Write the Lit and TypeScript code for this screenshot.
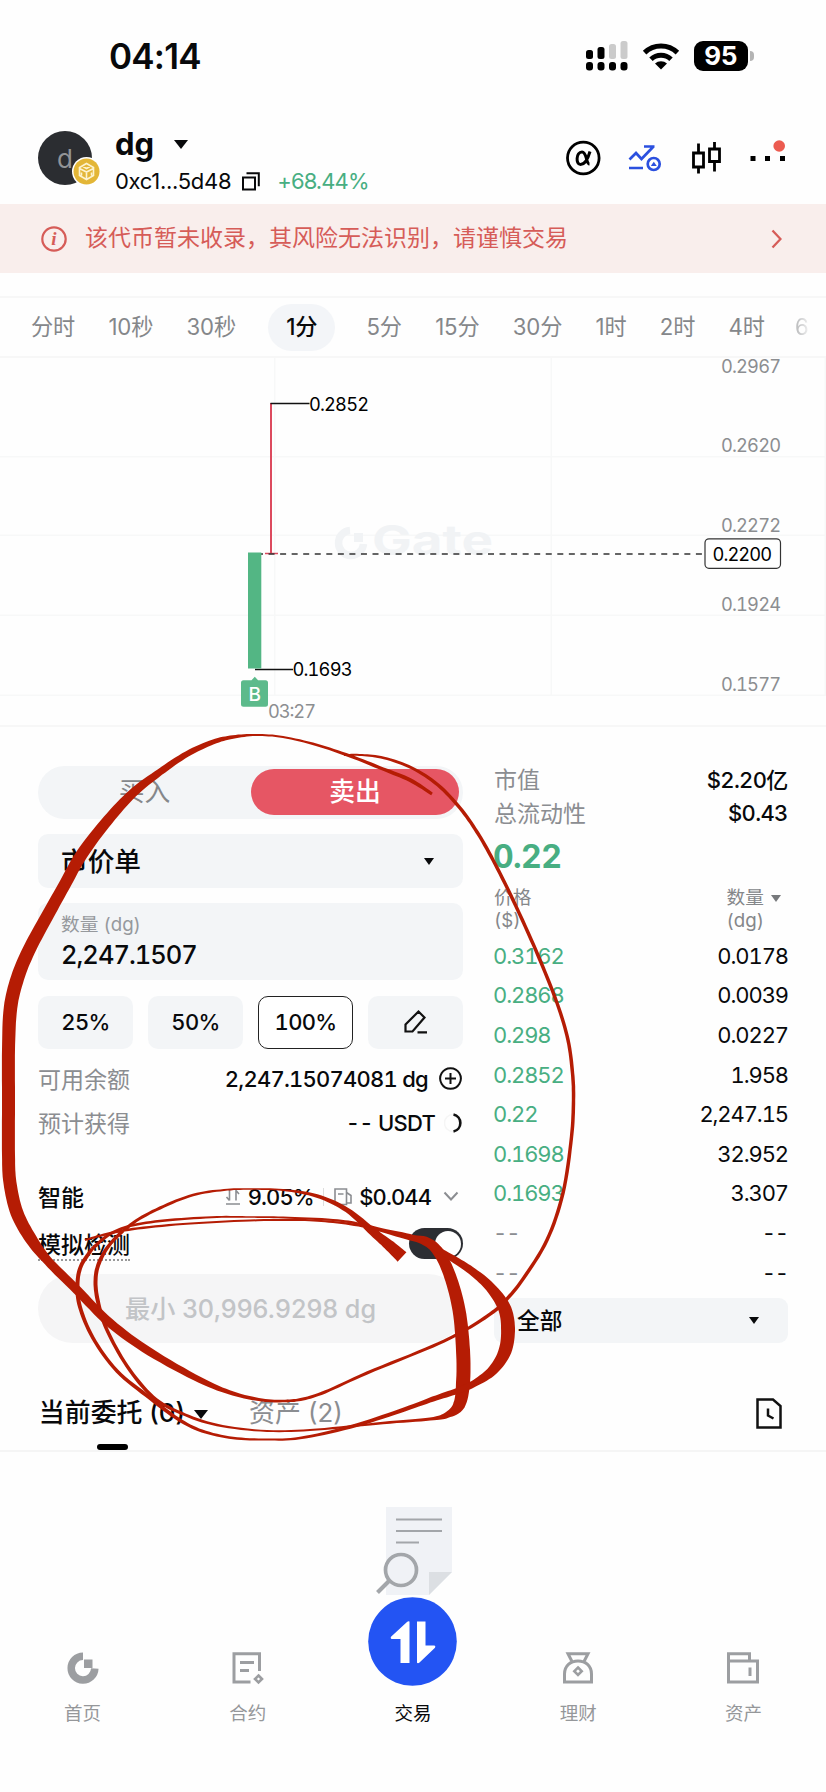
import { LitElement, html, svg, css } from "lit";
import { customElement } from "lit/decorators.js";
import { classMap } from "lit/directives/class-map.js";

const base = css`
  :host {
    display: block;
    font-family: Inter, "Noto Sans CJK SC", sans-serif;
    font-variant-numeric: tabular-nums;
    color: #08090b;
  }
  * {
    box-sizing: border-box;
  }
  svg {
    display: block;
    flex: none;
  }
  .caret {
    flex: none;
    width: 0;
    height: 0;
    border-left: 5.5px solid transparent;
    border-right: 5.5px solid transparent;
    border-top: 7px solid #08090b;
  }
`;

type Pt = [number, number, number];

/* Builds the outline of a brush stroke: each point is x, y and width. */
function brush(pts: Pt[]): string {
  const s: Pt[] = [];
  const n = pts.length;
  for (let i = 0; i < n - 1; i++) {
    const p0 = pts[Math.max(0, i - 1)];
    const p1 = pts[i];
    const p2 = pts[i + 1];
    const p3 = pts[Math.min(n - 1, i + 2)];
    for (let k = 0; k < 8; k++) {
      const t = k / 8;
      const f = (j: number) =>
        0.5 *
        (2 * p1[j] +
          (p2[j] - p0[j]) * t +
          (2 * p0[j] - 5 * p1[j] + 4 * p2[j] - p3[j]) * t * t +
          (3 * p1[j] - p0[j] - 3 * p2[j] + p3[j]) * t * t * t);
      s.push([f(0), f(1), p1[2] + (p2[2] - p1[2]) * t]);
    }
  }
  s.push(pts[n - 1]);
  const a: string[] = [];
  const b: string[] = [];
  s.forEach((p, i) => {
    const q = s[Math.max(0, i - 1)];
    const r = s[Math.min(s.length - 1, i + 1)];
    const dx = r[0] - q[0];
    const dy = r[1] - q[1];
    const l = Math.hypot(dx, dy) || 1;
    const ox = ((-dy / l) * p[2]) / 2;
    const oy = ((dx / l) * p[2]) / 2;
    a.push(`${(p[0] + ox).toFixed(1)} ${(p[1] + oy).toFixed(1)}`);
    b.unshift(`${(p[0] - ox).toFixed(1)} ${(p[1] - oy).toFixed(1)}`);
  });
  return `M${a.join("L")}L${b.join("L")}Z`;
}

const STROKES: Pt[][] = [
  [
    [344, 755, 2], [362, 755, 2], [384, 758, 2.5], [412, 768, 3], [438, 785, 3.5], [460, 808, 3.5], [477, 832, 3.5],
    [493, 860, 3.5], [513, 900, 3.5], [537, 953, 3.5], [557, 1003, 3.5], [568, 1040, 3.5], [572.5, 1073, 3.5],
    [573.5, 1100, 3.5], [571.5, 1137, 3.5], [563, 1193, 3.5], [547, 1240, 3.5], [523, 1279, 3.5], [506, 1300, 3.5],
    [493, 1312, 3.5], [467, 1329, 3], [433, 1346, 3], [367, 1373, 3], [325, 1392, 3], [303, 1399, 3], [285, 1401, 2.5],
    [262, 1400, 3], [233, 1393.5, 4], [200, 1380, 6], [150, 1352, 8], [110, 1323, 9], [77, 1290, 9], [48, 1261, 9],
    [31, 1239, 12], [17, 1213, 13], [10, 1183, 13], [8.5, 1155, 13], [8.5, 1100, 13], [8.5, 1050, 13], [10.5, 1008, 13.5],
    [17.5, 978, 13.5], [28.5, 951, 13], [45, 920, 12.5], [64, 886, 12], [82, 854, 12], [108, 820, 10.5],
    [133, 793, 9], [160, 772, 7], [187, 754, 6], [213, 742, 5], [233, 737, 3.5], [256, 735, 2], [283, 737, 2],
    [317, 745, 2.5], [350, 756, 3], [383, 769, 3.5], [410, 780, 4], [432, 794, 3],
  ],
  [
    [402, 1257, 13], [390, 1246, 11], [373, 1232, 8], [347, 1210, 5], [317, 1196, 3.5], [283, 1190, 2], [250, 1189, 1.5],
    [224, 1190, 2], [193, 1195, 2.5], [160, 1208, 3], [133, 1223, 3], [111, 1243, 3.5], [99, 1263, 4], [95.5, 1282, 4],
    [98.5, 1304, 4], [107, 1330, 3.5], [127, 1366, 3.5], [153, 1397, 3.5], [181, 1413, 3], [217, 1425, 2.5],
    [267, 1431, 1.8], [317, 1429.5, 2], [383, 1423, 2.5], [430, 1419, 3], [447, 1415, 6], [459, 1405, 12],
    [463, 1383, 14], [463, 1350, 14], [459, 1310, 13], [450, 1276, 12], [439, 1253, 11], [425, 1241, 9], [400, 1236, 3],
    [367, 1227, 2.5], [333, 1222, 2.2], [300, 1220, 2], [250, 1220.5, 2], [183, 1224, 2], [133, 1229, 2.5],
    [107, 1234, 2.5], [85, 1240, 2],
  ],
  [
    [92, 1249, 3.5], [81, 1266, 4], [77.5, 1284, 4], [80, 1307, 4], [93, 1338, 3.5], [117, 1371, 3.5], [150, 1398, 4],
    [178, 1419, 3.5], [202, 1431, 3], [233, 1438, 2.5], [267, 1439.5, 2], [300, 1438, 2.5], [350, 1427, 3.5],
    [400, 1411, 4], [433, 1399, 5], [457, 1391, 6], [475, 1383, 7], [493, 1370, 10], [505, 1351, 13], [508, 1328, 14],
    [504, 1307, 13], [490, 1287, 10], [473, 1272, 8], [455, 1260, 7], [433, 1247, 5], [413, 1237, 4], [383, 1230, 3],
    [360, 1224, 2.5], [333, 1220, 2.2], [283, 1217.5, 2], [250, 1217, 1.5], [217, 1217, 2], [170, 1220, 2.5],
    [134, 1225, 2.5], [110, 1234, 3], [92, 1249, 3.5],
  ],
];

@customElement("status-bar")
class StatusBar extends LitElement {
  static styles = [
    base,
    css`
      .bar {
        height: 112px;
        display: flex;
        align-items: center;
        justify-content: space-between;
        padding: 0 72px 0 109px;
      }
      .time {
        font-size: 35px;
        font-weight: 600;
        letter-spacing: -0.8px;
        font-variant-numeric: normal;
      }
      .right {
        display: flex;
        align-items: center;
      }
      .wifi {
        margin: 0 14px 0 13px;
      }
      .battery {
        display: flex;
        align-items: center;
      }
      .cell {
        width: 54px;
        height: 30px;
        border-radius: 9px;
        background: #000;
        color: #fff;
        font-size: 26px;
        font-weight: 700;
        line-height: 30px;
        text-align: center;
      }
      .nub {
        margin-left: 2px;
        width: 4px;
        height: 10px;
        border-radius: 0 5px 5px 0;
        background: #b4b4b4;
      }
    `,
  ];
  render() {
    return html`<div class="bar">
      <div class="time">04:14</div>
      <div class="right">
        <svg width="43" height="30" viewBox="0 0 43 30">
          <g fill="#000">
            <rect x="0" y="9" width="7" height="9" rx="2.5" />
            <rect x="11.5" y="6" width="7" height="12" rx="2.5" />
            ${[0, 11.5, 23, 34.5].map((x) => svg`<rect x=${x} y="21" width="7" height="8.5" rx="3" />`)}
          </g>
          <g fill="#cbcbcb">
            <rect x="23" y="3" width="7" height="15" rx="2.5" />
            <rect x="34.5" y="0" width="7" height="18" rx="2.5" />
          </g>
        </svg>
        <svg class="wifi" width="38" height="28" viewBox="0 0 38 28">
          <g fill="none" stroke="#000" stroke-width="5">
            <path d="M2.6 10.6a23.5 23.5 0 0 1 32.8 0" />
            <path d="M9 17.2a14.5 14.5 0 0 1 20 0" />
          </g>
          <path d="M19 27.5l-6-6a9 9 0 0 1 12 0z" />
        </svg>
        <div class="battery"><div class="cell">95</div><div class="nub"></div></div>
      </div>
    </div>`;
  }
}

@customElement("token-header")
class TokenHeader extends LitElement {
  static styles = [
    base,
    css`
      .head {
        height: 92px;
        display: flex;
        padding: 0 38px;
      }
      .avatar {
        position: relative;
        margin-top: 19px;
        width: 54px;
        height: 54px;
        border-radius: 50%;
        background: #2b2d31;
        color: #929497;
        font-size: 26px;
        line-height: 55px;
        text-align: center;
      }
      .chain {
        position: absolute;
        left: 33.5px;
        top: 25.5px;
      }
      .info {
        margin-left: 23px;
      }
      .name {
        margin-top: 10px;
        height: 42px;
        display: flex;
        align-items: center;
        font-size: 31px;
        font-weight: 700;
      }
      .name .caret {
        margin: 2px 0 0 20px;
        border-left-width: 7px;
        border-right-width: 7px;
        border-top-width: 9px;
      }
      .addr {
        padding-top: 2px;
        height: 32px;
        display: flex;
        align-items: center;
        font-size: 22px;
        letter-spacing: -0.3px;
        font-variant-numeric: normal;
      }
      .copy {
        margin: 0 17px 0 11px;
      }
      .up {
        color: #48ae82;
        letter-spacing: -0.9px;
      }
      .tools {
        margin: 24px 3px 0 auto;
        display: flex;
        height: 44px;
        align-items: center;
      }
      .banner {
        height: 69px;
        display: flex;
        align-items: center;
        background: #f9eeec;
        color: #d65c58;
        padding: 0 44px 0 41px;
        font-size: 23px;
      }
      .banner span {
        flex: 1;
        margin: -6px 0 0 18px;
      }
      .i {
        font: italic 700 19px "Liberation Serif", serif;
      }
    `,
  ];
  render() {
    return html`<div class="head">
        <div class="avatar">
          d
          <svg class="chain" width="29" height="29" viewBox="0 0 29 29">
            <circle cx="14.5" cy="14.5" r="14.5" fill="#fff" />
            <circle cx="14.5" cy="14.5" r="13" fill="#e3b637" />
            <path
              d="M14.5 6.5l7 4v8l-7 4-7-4v-8zM7.5 11.5l7 3.5 7-3.5M14.5 15v7M11 9.5l3.5 2 3.5-2M9.5 15.5v3M19.5 15.5v3"
              fill="none"
              stroke="#fdf3cf"
              stroke-width="1.6"
            />
          </svg>
        </div>
        <div class="info">
          <div class="name">dg<i class="caret"></i></div>
          <div class="addr">
            0xc1...5d48
            <svg class="copy" width="18" height="19" viewBox="0 0 18 19">
              <path d="M1 5.5h12v12H1zM4.5 1.2h12.3v13" fill="none" stroke="#08090b" stroke-width="2" />
            </svg>
            <span class="up">+68.44%</span>
          </div>
        </div>
        <div class="tools">
          <svg width="220" height="44" viewBox="566 136 220 44">
            <g fill="none" stroke="#000" stroke-width="2.8">
              <circle cx="584.3" cy="158" r="15.8" />
              <path d="M591 151.5c-2 7-5 13-9.5 13-5 0-4.5-12.5 1.5-12.5 5 0 4 12 7.5 12" stroke-width="3" />
              <path
                d="M694.5 153h10v14h-10zM699.5 143.5v9M699.5 167v6.5M710.5 149h10v12.5h-10zM715.5 142v7M715.5 161.5v10"
              />
            </g>
            <g fill="none" stroke="#2b50df" stroke-width="2.7">
              <path d="M630.5 159.5l6.5-6.5 5.5 6 12-12.5M645 146.5h10.5M630 168h14" />
              <circle cx="654.7" cy="164" r="6" />
            </g>
            <path d="M651.8 166l3-4.2 3 4.2z" fill="#2b50df" />
            <path d="M751.5 156h5v5h-5zM766 156h5v5h-5zM781 156h5v5h-5z" />
            <circle cx="780.2" cy="146" r="5.8" fill="#ec5b50" />
          </svg>
        </div>
      </div>
      <div class="banner">
        <svg width="26" height="26" viewBox="0 0 26 26">
          <circle cx="13" cy="13" r="11.7" fill="none" stroke="#d65c58" stroke-width="2.2" />
          <text class="i" x="13" y="19" text-anchor="middle" fill="#d65c58">i</text>
        </svg>
        <span>该代币暂未收录，其风险无法识别，请谨慎交易</span>
        <svg width="11" height="20" viewBox="0 0 11 20">
          <path d="M1.5 1.5l8 8.5-8 8.5" fill="none" stroke="#d65c58" stroke-width="2.3" />
        </svg>
      </div>`;
  }
}

@customElement("time-tabs")
class TimeTabs extends LitElement {
  static styles = [
    base,
    css`
      .tabs {
        margin-top: 23px;
        height: 62px;
        border-top: 2px solid #f7f7f7;
        border-bottom: 2px solid #f7f7f7;
        display: flex;
        align-items: center;
        padding: 0 0 0 31px;
        gap: 33.2px;
        white-space: nowrap;
        font-size: 22.2px;
        letter-spacing: -0.1px;
        font-variant-numeric: normal;
        line-height: 45px;
        color: #85878a;
      }
      .tabs div {
        padding-bottom: 2px;
      }
      .tabs .on {
        width: 67px;
        height: 47px;
        border-radius: 24px;
        background: #f3f5f8;
        color: #08090b;
        font-weight: 500;
        text-align: center;
        margin: 0 -2px 0 -1px;
      }
      .tabs .fade {
        width: 14px;
        margin-left: -3px;
        -webkit-mask-image: linear-gradient(90deg, rgba(0, 0, 0, 0.6), rgba(0, 0, 0, 0.1));
        mask-image: linear-gradient(90deg, rgba(0, 0, 0, 0.6), rgba(0, 0, 0, 0.1));
      }
    `,
  ];
  render() {
    const t = ["分时", "10秒", "30秒", "1分", "5分", "15分", "30分", "1时", "2时", "4时", "6"];
    return html`<div class="tabs">
      ${t.map((x, i) => html`<div class=${classMap({ on: i === 3, fade: i === 10 })}>${x}</div>`)}
    </div>`;
  }
}

@customElement("price-chart")
class PriceChart extends LitElement {
  static styles = [
    base,
    css`
      .chart {
        border-bottom: 2px solid #f7f7f7;
        height: 369px;
      }
      svg {
        overflow: visible;
      }
      text {
        font-family: Inter, sans-serif;
        font-size: 18.3px;
      }
      .mark {
        font-size: 41px;
        font-weight: 700;
        fill: #f1f3f5;
      }
      .axis {
        fill: #8c8e91;
      }
      .b {
        font-size: 19px;
        fill: #fff;
        font-weight: 500;
      }
    `,
  ];
  render() {
    const axis: [string, number][] = [
      ["0.2967", 366],
      ["0.2620", 445.5],
      ["0.2272", 525],
      ["0.1924", 604.5],
      ["0.1577", 684],
    ];
    return html`<div class="chart">
      <svg width="826" height="367" viewBox="0 358 826 367">
        <g fill="#f7f8f8">
          ${[456, 534.5, 614.5, 694.5].map((y) => svg`<rect x="0" y=${y} width="826" height="1.5" />`)}
          ${[274, 550.5, 824.5].map((x) => svg`<rect x=${x} y="358" width="1.5" height="337" />`)}
        </g>
        <path d="M350 530.5a12.5 12.5 0 1 0 13.5 13.5" fill="none" stroke="#f1f3f5" stroke-width="7.5" />
        <rect x="354" y="533" width="9" height="9" fill="#f1f3f5" />
        <text class="mark" x="372" y="555" textLength="121" lengthAdjust="spacingAndGlyphs">Gate</text>
        <path d="M271 403v150" stroke="#dc4a5e" stroke-width="2" />
        <path d="M265 553.5h13" stroke="#dc4a5e" stroke-width="1.5" />
        <path d="M270.5 403.5h39M255 669.5h38" stroke="#111" stroke-width="1.7" />
        <path d="M257 554h446" stroke="#333" stroke-width="1.5" stroke-dasharray="6 5.55" />
        <rect x="248" y="552.5" width="13.3" height="116" fill="#53b684" />
        <text x="309" y="410.5" textLength="60">0.2852</text>
        <text x="292.5" y="676.3" textLength="60">0.1693</text>
        <path
          d="M243.5 680.3h8l3.3-3.5 3.3 3.5h7.4a2.5 2.5 0 0 1 2.5 2.5v21.5a2.5 2.5 0 0 1-2.5 2.5h-22a2.5 2.5 0 0 1-2.5-2.5v-21.5a2.5 2.5 0 0 1 2.5-2.5z"
          fill="#5cba8b"
        />
        <text class="b" x="254.8" y="701" text-anchor="middle">B</text>
        <text class="axis" x="268" y="718.3" textLength="48">03:27</text>
        ${axis.map(([t, y]) => svg`<text class="axis" x="721" y=${y + 6.5} textLength="60">${t}</text>`)}
        <rect x="705" y="538.8" width="75.5" height="29.5" rx="4" fill="#fff" stroke="#333" stroke-width="1.2" />
        <text x="712.5" y="560.5" textLength="59.5">0.2200</text>
      </svg>
    </div>`;
  }
}

@customElement("order-form")
class OrderForm extends LitElement {
  static styles = [
    base,
    css`
      .form {
        width: 425px;
        padding-top: 38.5px;
      }
      .seg {
        height: 53px;
        border-radius: 27px;
        background: #f3f5f7;
        display: flex;
        align-items: center;
        padding: 0 4px 0 0;
        font-size: 25.8px;
        text-align: center;
      }
      .seg div {
        flex: 1;
        height: 46px;
        line-height: 45px;
        color: #85878a;
      }
      .seg .sell {
        flex: none;
        width: 208px;
        border-radius: 23px;
        background: #e65664;
        color: #fff;
        font-weight: 500;
      }
      .select {
        margin-top: 15.5px;
        height: 54px;
        border-radius: 10px;
        background: #f3f5f7;
        display: flex;
        align-items: center;
        justify-content: space-between;
        padding: 0 29.5px 0 23px;
        font-size: 26.7px;
        font-weight: 500;
      }
      .select span {
        padding-bottom: 4px;
      }
      .input {
        margin-top: 15px;
        height: 77px;
        border-radius: 10px;
        background: #f3f5f7;
        padding: 10px 23px 0;
      }
      .label {
        font-size: 18.7px;
        line-height: 24px;
        color: #96999d;
      }
      .value {
        font-size: 25.5px;
        line-height: 36px;
        font-weight: 500;
        letter-spacing: -1px;
      }
      .pct {
        margin-top: 15.5px;
        display: grid;
        grid-template-columns: repeat(4, 95px);
        justify-content: space-between;
        height: 53px;
        font-size: 22px;
        font-weight: 500;
        letter-spacing: -0.7px;
      }
      .pct div {
        border-radius: 10px;
        background: #f3f5f7;
        display: flex;
        align-items: center;
        justify-content: center;
      }
      .pct .on {
        background: #fff;
        border: 1.5px solid #222;
      }
      .row {
        height: 44px;
        display: flex;
        align-items: center;
        font-size: 23px;
      }
      .row.first {
        margin-top: 8px;
      }
      .row.smart {
        margin-top: 30px;
      }
      .row.sim {
        margin-top: 3px;
      }
      .key {
        flex: 1;
        color: #8b8d91;
        padding-bottom: 2px;
      }
      .key.dark {
        color: #08090b;
        font-weight: 500;
      }
      .dotted {
        border-bottom: 2px dotted #999;
      }
      .num {
        font-size: 22px;
        font-weight: 500;
        letter-spacing: -0.75px;
      }
      .num.tight {
        letter-spacing: -0.9px;
      }
      .plus {
        margin: 0 1px 0 11px;
      }
      .spin {
        margin-left: 9px;
      }
      .bar {
        width: 1.5px;
        height: 18px;
        background: #ddd;
        margin: 0 10px 0 9px;
      }
      .gap {
        margin-right: 7px;
      }
      .gas {
        margin-right: 6px;
      }
      .chev {
        margin: 0 4px 0 12px;
      }
      .toggle {
        width: 54px;
        height: 31px;
        border-radius: 16px;
        background: #2c2e33;
        display: flex;
        align-items: center;
        justify-content: flex-end;
        padding-right: 2px;
      }
      .knob {
        width: 26px;
        height: 26px;
        border-radius: 50%;
        background: #fff;
      }
      .submit {
        margin-top: 8px;
        height: 69px;
        border-radius: 35px;
        background: #f5f5f6;
        color: #c2c4c7;
        font-size: 25.2px;
        font-weight: 500;
        line-height: 71px;
        text-align: center;
        font-variant-numeric: normal;
      }
    `,
  ];
  render() {
    return html`<div class="form">
      <div class="seg"><div>买入</div><div class="sell">卖出</div></div>
      <div class="select"><span>市价单</span><i class="caret"></i></div>
      <div class="input">
        <div class="label">数量 (dg)</div>
        <div class="value">2,247.1507</div>
      </div>
      <div class="pct">
        <div>25%</div>
        <div>50%</div>
        <div class="on">100%</div>
        <div>
          <svg width="26" height="26" viewBox="0 0 26 26">
            <path
              d="M2.5 15.5L15.5 2.5l6 6L9.5 22.5h-7zM14.5 23.3h9.5"
              fill="none"
              stroke="#111"
              stroke-width="2.2"
            />
          </svg>
        </div>
      </div>
      <div class="row first">
        <span class="key">可用余额</span><span class="num">2,247.15074081 dg</span>
        <svg class="plus" width="23" height="23" viewBox="0 0 23 23">
          <path d="M11.5 6v11M6 11.5h11M11.5 1.2a10.3 10.3 0 1 0 .01 0z" fill="none" stroke="#111" stroke-width="2" />
        </svg>
      </div>
      <div class="row">
        <span class="key">预计获得</span><span class="num">-- USDT</span>
        <svg class="spin" width="19" height="20" viewBox="0 0 19 20">
          <circle cx="9" cy="10" r="8.5" fill="none" stroke="#f5f5f5" stroke-width="1.5" />
          <path d="M9.5 1.5a8.7 8.7 0 0 1 0 17" fill="none" stroke="#111" stroke-width="2.6" />
        </svg>
      </div>
      <div class="row smart">
        <span class="key dark">智能</span>
        <svg class="gap" width="16" height="16" viewBox="0 0 16 16">
          <path
            d="M1 15h14M4.5 1v10.5M4.5 11.5l-3-3.5M11 11.5V1.5l3 3.5"
            fill="none"
            stroke="#8b8d91"
            stroke-width="1.6"
          />
        </svg>
        <span class="num tight">9.05%</span><i class="bar"></i>
        <svg class="gas" width="19" height="18" viewBox="0 0 19 18">
          <path
            d="M1 1h11.5v15.5H1zM4 6h5.5M12.5 4.5l4.5 3v7.5h-4"
            fill="none"
            stroke="#8b8d91"
            stroke-width="1.6"
          />
        </svg>
        <span class="num tight">$0.044</span>
        <svg class="chev" width="16" height="11" viewBox="0 0 16 11">
          <path d="M1.5 1.5l6.5 7 6.5-7" fill="none" stroke="#8b8d91" stroke-width="2" />
        </svg>
      </div>
      <div class="row sim">
        <span class="key dark"><span class="dotted">模拟检测</span></span>
        <div class="toggle"><div class="knob"></div></div>
      </div>
      <div class="submit">最小 30,996.9298 dg</div>
    </div>`;
  }
}

@customElement("order-book")
class OrderBook extends LitElement {
  static styles = [
    base,
    css`
      .book {
        width: 294px;
        padding-top: 34px;
        font-size: 22px;
      }
      .stat {
        height: 34.5px;
        display: flex;
        align-items: center;
        justify-content: space-between;
        font-weight: 500;
        letter-spacing: -0.7px;
        padding-right: 0.5px;
      }
      .stat span {
        color: #8b8d91;
        font-weight: 400;
        font-size: 23px;
        letter-spacing: 0;
        padding-bottom: 1px;
      }
      .last {
        height: 56px;
        line-height: 54px;
        font-size: 32px;
        font-weight: 700;
        letter-spacing: -0.6px;
        margin-left: -1px;
        color: #48ae82;
      }
      .heads {
        display: flex;
        justify-content: space-between;
        font-size: 18.7px;
        line-height: 23.3px;
        color: #85878a;
        height: 50px;
      }
      .qty {
        display: flex;
        gap: 7px;
        text-align: center;
        padding-right: 7px;
      }
      .qty .caret {
        border-top-color: #77797c;
        margin-top: 9px;
      }
      .line {
        height: 39.6px;
        display: flex;
        align-items: center;
        justify-content: space-between;
        font-size: 22px;
        letter-spacing: -1.1px;
      }
      .p {
        color: #48ae82;
        margin-left: -1px;
      }
      .p.none {
        color: #8b8d91;
      }
      .all {
        margin-top: 6px;
        height: 45px;
        border-radius: 9px;
        background: #f3f5f7;
        display: flex;
        align-items: center;
        justify-content: space-between;
        padding: 0 29.5px 0 23px;
        font-size: 22.7px;
        font-weight: 500;
      }
      .all span {
        padding-bottom: 3px;
      }
    `,
  ];
  render() {
    const rows = [
      ["0.3162", "0.0178"],
      ["0.2868", "0.0039"],
      ["0.298", "0.0227"],
      ["0.2852", "1.958"],
      ["0.22", "2,247.15"],
      ["0.1698", "32.952"],
      ["0.1693", "3.307"],
      ["--", "--"],
      ["--", "--"],
    ];
    return html`<div class="book">
      <div class="stat"><span>市值</span>$2.20亿</div>
      <div class="stat"><span>总流动性</span>$0.43</div>
      <div class="last">0.22</div>
      <div class="heads">
        <div>价格<br />($)</div>
        <div class="qty"><div>数量<br />(dg)</div><i class="caret"></i></div>
      </div>
      ${rows.map(
        ([p, q]) => html`<div class="line">
          <span class=${classMap({ p: true, none: p === "--" })}>${p}</span><span>${q}</span>
        </div>`,
      )}
      <div class="all"><span>全部</span><i class="caret"></i></div>
    </div>`;
  }
}

@customElement("order-tabs")
class OrderTabs extends LitElement {
  static styles = [
    base,
    css`
      .tabs {
        margin-top: 37px;
        height: 71px;
        border-bottom: 2px solid #f5f5f5;
        padding: 0 44px 0 39px;
        display: flex;
        font-size: 25.9px;
        line-height: 64px;
        color: #8b8d91;
        font-variant-numeric: normal;
      }
      .cur {
        color: #08090b;
        font-weight: 500;
        width: 146px;
        display: flex;
        flex-direction: column;
        align-items: center;
        white-space: nowrap;
      }
      .cur::after {
        content: "";
        width: 31px;
        height: 6px;
        border-radius: 3px;
        background: #000;
        margin-top: -1px;
      }
      .caret {
        border-left-width: 7px;
        border-right-width: 7px;
        border-top-width: 9px;
        margin: 29px 41px 0 9px;
      }
      .hist {
        margin: 17px 0 0 auto;
      }
      .empty {
        height: 177px;
        padding: 55px 0 0 376px;
      }
    `,
  ];
  render() {
    return html`<div class="tabs">
        <div class="cur">当前委托 (0)</div>
        <i class="caret"></i>
        <div>资产 (2)</div>
        <svg class="hist" width="26" height="31" viewBox="0 0 26 31">
          <path
            d="M1.5 1.5h15.5l7.5 6.5v21.5h-23zM12 10.5v7l5.5 3"
            fill="none"
            stroke="#111"
            stroke-width="2.5"
          />
        </svg>
      </div>
      <div class="empty">
        <svg width="78" height="90" viewBox="0 0 78 90">
          <path d="M10 0h66v65L53 88H10z" fill="#f0f2f6" />
          <path d="M53 65h23L53 88z" fill="#dcdfe3" />
          <path d="M20 12.5h46M20 24h46M20 35.5h23" stroke="#a3a6aa" stroke-width="1.8" />
          <path d="M13 74L1.5 85.5" stroke="#a3a6aa" stroke-width="4" />
          <circle cx="25" cy="63" r="15.5" fill="#f0f2f6" stroke="#a3a6aa" stroke-width="3.7" />
        </svg>
      </div>`;
  }
}

@customElement("bottom-nav")
class BottomNav extends LitElement {
  static styles = [
    base,
    css`
      .nav {
        height: 164px;
        display: grid;
        grid-template-columns: repeat(5, 1fr);
        font-size: 18.5px;
        color: #95979a;
        text-align: center;
      }
      .item {
        display: flex;
        flex-direction: column;
        align-items: center;
        justify-content: flex-end;
        padding-bottom: 68px;
        line-height: 24px;
        gap: 16px;
      }
      .item.on {
        color: #08090b;
        gap: 15px;
      }
    `,
  ];
  render() {
    const s = "#9c9ea1";
    return html`<div class="nav">
      <div class="item">
        <svg width="34" height="34" viewBox="0 0 34 34">
          <path d="M17 5.3a11.8 11.8 0 1 0 11.8 12.2" fill="none" stroke=${s} stroke-width="7.5" />
          <path d="M18 8.5h8.5v8.5H18z" fill=${s} />
        </svg>
        首页
      </div>
      <div class="item">
        <svg width="34" height="34" viewBox="0 0 34 34">
          <g fill="none" stroke=${s} stroke-width="3">
            <path d="M28.5 20V2.8H3V31h16.5M9 11.5h14M9 19.5h9" />
            <path d="M27.5 24.5l3.5 3.5-3.5 3.5-3.5-3.5z" stroke-width="2.6" />
          </g>
        </svg>
        合约
      </div>
      <div class="item on">
        <svg width="89" height="89" viewBox="0 0 89 89">
          <circle cx="44.5" cy="44.5" r="44.3" fill="#2354f3" />
          <path
            d="M41.5 24.5V66h-9V42h-9q-1.5-1-.5-2.2L39 25q1.5-1.3 2.5-.5zM49 24.5h8.5v24h9q1.5.8.5 2.2L51.5 65.5q-1.5 1.3-2.5.3z"
            fill="#fff"
          />
        </svg>
        交易
      </div>
      <div class="item">
        <svg width="34" height="34" viewBox="0 0 34 34">
          <g fill="none" stroke=${s} stroke-width="3">
            <path d="M3.5 31V23c0-8.5 6-13 13.5-13s13.5 4.5 13.5 13v8zM11 10.5L7 2.8h20l-4 7.7" />
            <path d="M17 16.5l3.7 3.7-3.7 3.7-3.7-3.7z" stroke-width="2.6" />
          </g>
        </svg>
        理财
      </div>
      <div class="item">
        <svg width="34" height="34" viewBox="0 0 34 34">
          <path d="M2.5 10V2.8h21V10M2.5 10h29v21h-29zM24 16.5v8.5" fill="none" stroke=${s} stroke-width="3" />
        </svg>
        资产
      </div>
    </div>`;
  }
}

@customElement("app-root")
class AppRoot extends LitElement {
  static styles = [
    base,
    css`
      :host {
        position: relative;
        width: 826px;
        height: 1792px;
        overflow: hidden;
        background: #fefefe;
      }
      .trade {
        display: flex;
        justify-content: space-between;
        padding: 0 38px;
        height: 617px;
      }
      bottom-nav {
        margin-top: -32px;
      }
      .ink {
        position: absolute;
        left: 0;
        top: 0;
        pointer-events: none;
      }
    `,
  ];
  render() {
    return html`
      <status-bar></status-bar>
      <token-header></token-header>
      <time-tabs></time-tabs>
      <price-chart></price-chart>
      <div class="trade">
        <order-form></order-form>
        <order-book></order-book>
      </div>
      <order-tabs></order-tabs>
      <bottom-nav></bottom-nav>
      <svg class="ink" width="826" height="1792" viewBox="0 0 826 1792">
        ${STROKES.map((p) => svg`<path d=${brush(p)} fill="#b51c04" />`)}
      </svg>
    `;
  }
}
